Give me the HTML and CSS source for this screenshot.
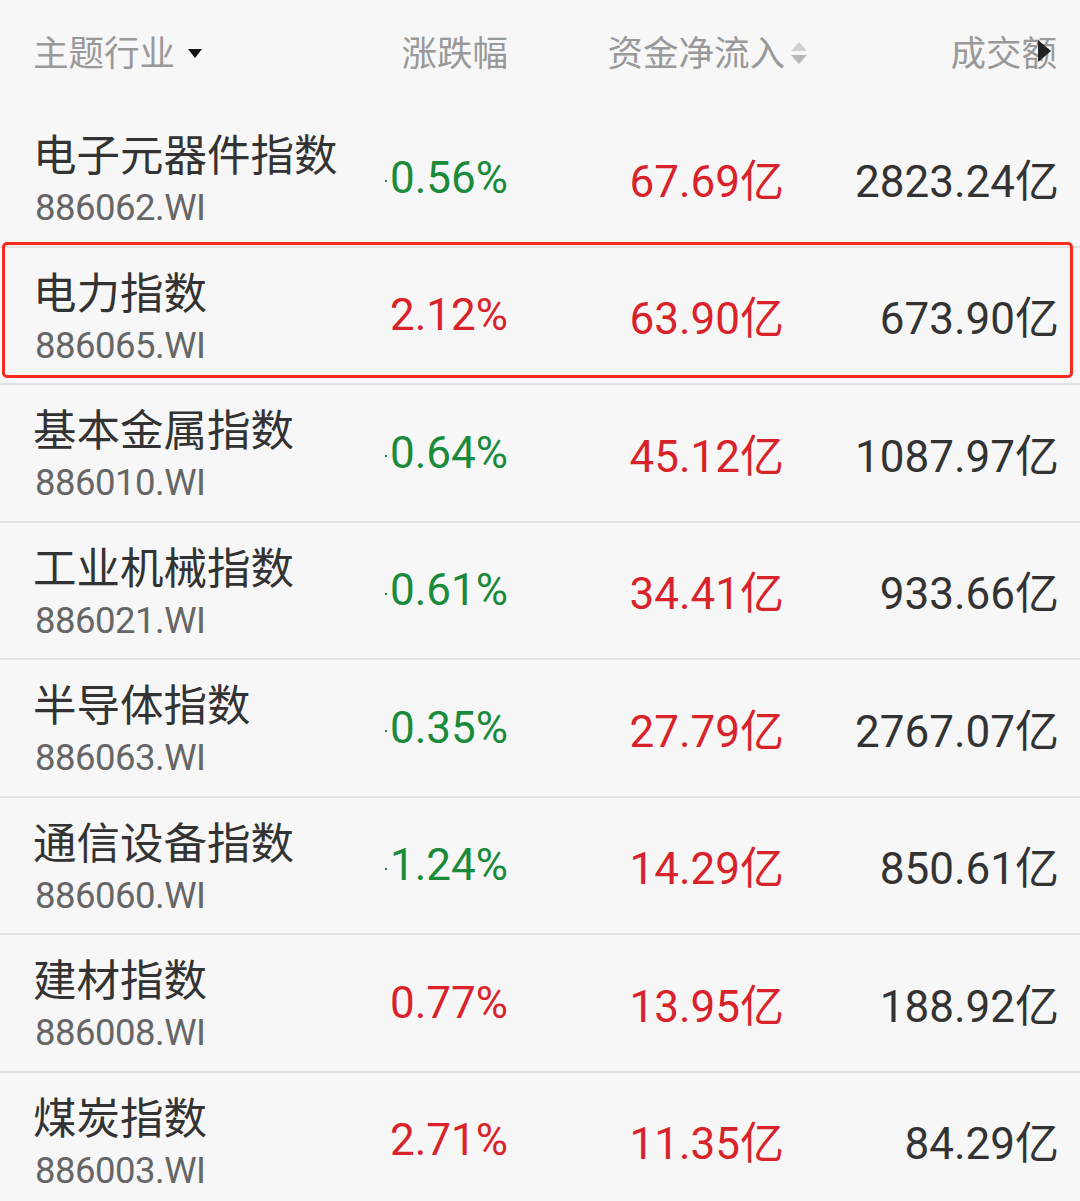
FILE: index.html
```html
<!DOCTYPE html>
<html lang="zh">

<head>
    <meta charset="UTF-8">
    <meta name="viewport" content="width=device-width, initial-scale=1.0">
    <title>主题行业</title>
    <link rel="stylesheet" href="styles.css">
</head>

<body>
    <div class="table">
        <!-- 表头 -->
        <div class="row head">
            <div class="cell name-head">主题行业<span class="caret-down"></span></div>
            <div class="cell num">涨跌幅</div>
            <div class="cell num">资金净流入<span class="sort"><i class="up"></i><i class="down"></i></span></div>
            <div class="cell num vol-head">成交额<span class="caret-right"></span></div>
        </div>

        <div class="row">
            <div class="cell name"><div class="title">电子元器件指数</div><div class="code">886062.WI</div></div>
            <div class="cell num green"><span class="dot"></span>0.56%</div>
            <div class="cell num red">67.69亿</div>
            <div class="cell num">2823.24亿</div>
        </div>
        <div class="row active">
            <div class="cell name"><div class="title">电力指数</div><div class="code">886065.WI</div></div>
            <div class="cell num red">2.12%</div>
            <div class="cell num red">63.90亿</div>
            <div class="cell num">673.90亿</div>
        </div>
        <div class="row">
            <div class="cell name"><div class="title">基本金属指数</div><div class="code">886010.WI</div></div>
            <div class="cell num green"><span class="dot"></span>0.64%</div>
            <div class="cell num red">45.12亿</div>
            <div class="cell num">1087.97亿</div>
        </div>
        <div class="row">
            <div class="cell name"><div class="title">工业机械指数</div><div class="code">886021.WI</div></div>
            <div class="cell num green"><span class="dot"></span>0.61%</div>
            <div class="cell num red">34.41亿</div>
            <div class="cell num">933.66亿</div>
        </div>
        <div class="row">
            <div class="cell name"><div class="title">半导体指数</div><div class="code">886063.WI</div></div>
            <div class="cell num green"><span class="dot"></span>0.35%</div>
            <div class="cell num red">27.79亿</div>
            <div class="cell num">2767.07亿</div>
        </div>
        <div class="row">
            <div class="cell name"><div class="title">通信设备指数</div><div class="code">886060.WI</div></div>
            <div class="cell num green"><span class="dot"></span>1.24%</div>
            <div class="cell num red">14.29亿</div>
            <div class="cell num">850.61亿</div>
        </div>
        <div class="row">
            <div class="cell name"><div class="title">建材指数</div><div class="code">886008.WI</div></div>
            <div class="cell num red">0.77%</div>
            <div class="cell num red">13.95亿</div>
            <div class="cell num">188.92亿</div>
        </div>
        <div class="row">
            <div class="cell name"><div class="title">煤炭指数</div><div class="code">886003.WI</div></div>
            <div class="cell num red">2.71%</div>
            <div class="cell num red">11.35亿</div>
            <div class="cell num">84.29亿</div>
        </div>
    </div>
</body>

</html>
```

FILE: styles.css
```css
body {
    margin: 0;
    padding: 0;
    background-color: #f7f7f7;
    font-family: 'Roboto', 'Noto Sans CJK SC', sans-serif;
    color: #333;
    overflow: hidden;
}

.table {
    width: 1080px;
}

.row {
    display: grid;
    grid-template-columns: 327px 148px 276px 275px;
    padding-left: 33px;
    height: 137.5px;
    box-sizing: border-box;
    border-bottom: 2px solid #e2e2e2;
    align-items: center;
    position: relative;
}

.row.head {
    height: 110px;
    border-bottom: none;
    align-items: start;
    padding-top: 27px;
}

.cell {
    white-space: nowrap;
}

.head .cell {
    font-family: 'Noto Sans CJK SC', sans-serif;
    font-size: 35.5px;
    line-height: 48px;
    color: #999;
}

.head .vol-head {
    margin-right: 2px;
}

.num {
    text-align: right;
    font-size: 44px;
}

.name {
    align-self: start;
    padding-top: 14px;
}

.title {
    font-family: 'Noto Sans CJK SC', sans-serif;
    font-size: 43.5px;
    line-height: 57px;
    color: #333;
}

.code {
    font-size: 36.5px;
    line-height: 54px;
    color: #666;
    letter-spacing: -0.5px;
    padding-left: 2px;
}

.green {
    color: #1a8a3b;
}

.red {
    color: #d8232a;
}

.dot {
    display: inline-block;
    width: 2px;
    height: 2px;
    background-color: #1a8a3b;
    vertical-align: middle;
    margin-right: 3px;
}

/* 选中行红框 */
.row.active::after {
    content: '';
    position: absolute;
    left: 2px;
    top: -6px;
    width: 1071px;
    height: 136px;
    border: 3px solid #fa2a20;
    border-radius: 5px;
    box-sizing: border-box;
}

.caret-down {
    display: inline-block;
    width: 0;
    height: 0;
    border-left: 7px solid transparent;
    border-right: 7px solid transparent;
    border-top: 9px solid #111;
    margin-left: 13px;
    vertical-align: middle;
    position: relative;
    top: -3px;
}

.sort {
    display: inline-flex;
    flex-direction: column;
    gap: 4px;
    margin-left: 6px;
    margin-right: -23px;
    vertical-align: middle;
    position: relative;
    top: -3px;
}

.sort i {
    width: 0;
    height: 0;
    border-left: 8px solid transparent;
    border-right: 8px solid transparent;
}

.sort .up {
    border-bottom: 9px solid #d0d0d0;
}

.sort .down {
    border-top: 9px solid #b8b8b8;
}

.vol-head {
    position: relative;
}

.caret-right {
    position: absolute;
    right: 6px;
    top: 13px;
    width: 0;
    height: 0;
    border-top: 11px solid transparent;
    border-bottom: 11px solid transparent;
    border-left: 13px solid #222;
}
```
